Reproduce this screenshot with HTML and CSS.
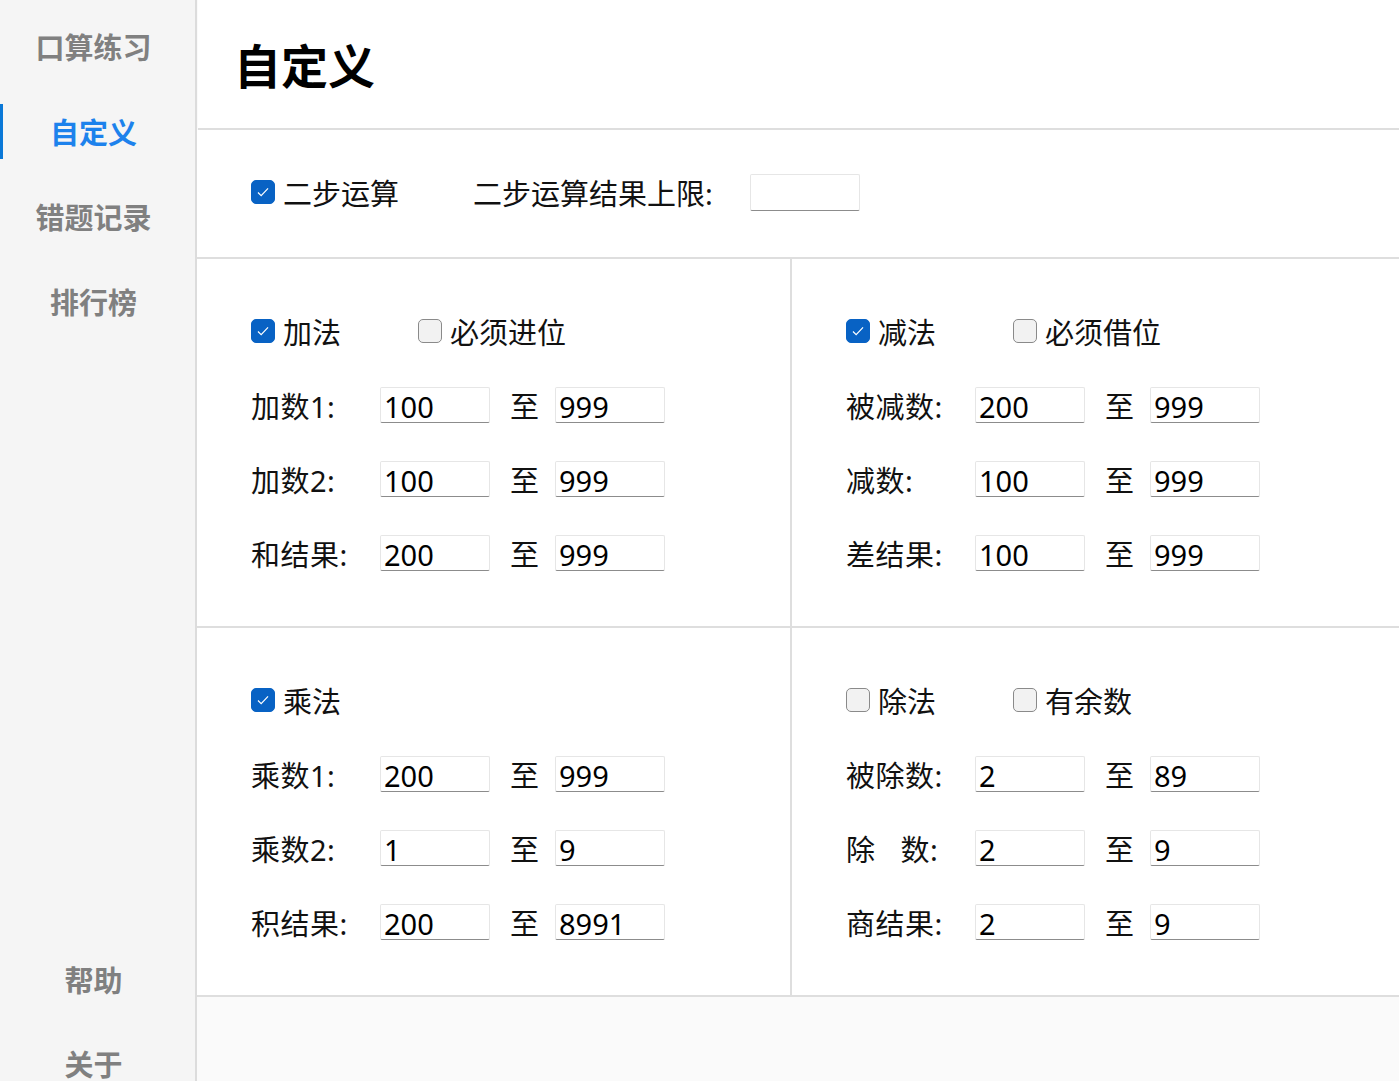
FILE: index.html
```html
<!DOCTYPE html>
<html lang="zh-CN">
<head>
  <meta charset="UTF-8">
  <title>自定义</title>
  <link rel="stylesheet" href="styles.css">
</head>
<body>
  <aside class="sidebar">
    <nav class="nav-top">
      <a class="nav-item">口算练习</a>
      <a class="nav-item active">自定义</a>
      <a class="nav-item">错题记录</a>
      <a class="nav-item">排行榜</a>
    </nav>
    <nav class="nav-bottom">
      <a class="nav-item">帮助</a>
      <a class="nav-item">关于</a>
    </nav>
  </aside>

  <main class="main">
    <header class="page-header">
      <h1>自定义</h1>
    </header>

    <section class="two-step">
      <label class="check on"><span class="box"><svg viewBox="0 0 24 24"><path d="M6.5 12.5l3.5 3.5 7.5-8" /></svg></span>二步运算</label>
      <span class="limit-label">二步运算结果上限:</span>
      <input class="num" type="text" value="">
    </section>

    <section class="ops">
      <div class="op">
        <div class="op-head">
          <label class="check on first"><span class="box"><svg viewBox="0 0 24 24"><path d="M6.5 12.5l3.5 3.5 7.5-8" /></svg></span>加法</label>
          <label class="check"><span class="box"></span>必须进位</label>
        </div>
        <div class="field"><span class="name">加数1:</span><input class="num" value="100"><span class="to">至</span><input class="num" value="999"></div>
        <div class="field"><span class="name">加数2:</span><input class="num" value="100"><span class="to">至</span><input class="num" value="999"></div>
        <div class="field"><span class="name">和结果:</span><input class="num" value="200"><span class="to">至</span><input class="num" value="999"></div>
      </div>

      <div class="op">
        <div class="op-head">
          <label class="check on first"><span class="box"><svg viewBox="0 0 24 24"><path d="M6.5 12.5l3.5 3.5 7.5-8" /></svg></span>减法</label>
          <label class="check"><span class="box"></span>必须借位</label>
        </div>
        <div class="field"><span class="name">被减数:</span><input class="num" value="200"><span class="to">至</span><input class="num" value="999"></div>
        <div class="field"><span class="name">减数:</span><input class="num" value="100"><span class="to">至</span><input class="num" value="999"></div>
        <div class="field"><span class="name">差结果:</span><input class="num" value="100"><span class="to">至</span><input class="num" value="999"></div>
      </div>

      <div class="op">
        <div class="op-head">
          <label class="check on first"><span class="box"><svg viewBox="0 0 24 24"><path d="M6.5 12.5l3.5 3.5 7.5-8" /></svg></span>乘法</label>
        </div>
        <div class="field"><span class="name">乘数1:</span><input class="num" value="200"><span class="to">至</span><input class="num" value="999"></div>
        <div class="field"><span class="name">乘数2:</span><input class="num" value="1"><span class="to">至</span><input class="num" value="9"></div>
        <div class="field"><span class="name">积结果:</span><input class="num" value="200"><span class="to">至</span><input class="num" value="8991"></div>
      </div>

      <div class="op">
        <div class="op-head">
          <label class="check first"><span class="box"></span>除法</label>
          <label class="check"><span class="box"></span>有余数</label>
        </div>
        <div class="field"><span class="name">被除数:</span><input class="num" value="2"><span class="to">至</span><input class="num" value="89"></div>
        <div class="field"><span class="name">除<span class="gap"></span>数:</span><input class="num" value="2"><span class="to">至</span><input class="num" value="9"></div>
        <div class="field"><span class="name">商结果:</span><input class="num" value="2"><span class="to">至</span><input class="num" value="9"></div>
      </div>
    </section>
  </main>
</body>
</html>
```

FILE: styles.css
```css
html, body {
  margin: 0;
  padding: 0;
  height: 100%;
  overflow: hidden;
}
body {
  display: flex;
  font-family: "Noto Sans", "Noto Sans CJK SC", sans-serif;
  color: #111;
  background: #fafafa;
}

/* sidebar */
.sidebar {
  width: 195px;
  flex: none;
  background: #f5f5f5;
  border-right: 2px solid #dcdcdc;
  display: flex;
  flex-direction: column;
  padding-top: 3px;
}
.nav-item {
  position: relative;
  display: flex;
  align-items: center;
  justify-content: center;
  height: 85px;
  padding-right: 8px;
  font-family: "Noto Sans CJK SC", sans-serif;
  font-size: 29px;
  font-weight: 700;
  color: #808080;
  cursor: pointer;
}
.nav-item.active {
  color: #1d82ec;
}
.nav-item.active::before {
  content: "";
  position: absolute;
  left: 0;
  top: 16px;
  width: 3px;
  height: 55px;
  background: #0a78d7;
}
.nav-bottom {
  margin-top: auto;
  margin-bottom: -24px;
}
.nav-bottom .nav-item {
  height: 84px;
}

/* main */
.main {
  flex: 1;
  display: flex;
  flex-direction: column;
  background: #fafafa;
}
.page-header {
  height: 130px;
  flex: none;
  background: #fff;
  border-bottom: 2px solid #dedede;
  display: flex;
  align-items: center;
  padding-left: 36px;
  box-sizing: border-box;
  margin-left: 1px;
}
.page-header h1 {
  margin: 0;
  padding-bottom: 2px;
  font-family: "Noto Sans CJK SC", sans-serif;
  font-size: 47px;
  font-weight: 700;
  color: #000;
}

.two-step {
  height: 129px;
  flex: none;
  box-sizing: border-box;
  background: #fff;
  border-bottom: 2px solid #dedede;
  display: flex;
  align-items: center;
  padding-left: 54px;
  padding-bottom: 3px;
}
.two-step .check {
  width: 222px;
}
.limit-label {
  font-size: 29px;
  width: 277px;
}
.two-step .num {
  height: 37px;
}

/* operation grid */
.ops {
  display: grid;
  grid-template-columns: 595px 1fr;
  background: #fff;
}
.op {
  height: 369px;
  box-sizing: border-box;
  padding: 35px 0 0 54px;
  border-bottom: 2px solid #dedede;
}
.op:nth-child(odd) {
  border-right: 2px solid #dedede;
}
.op-head, .field {
  height: 74px;
  display: flex;
  align-items: center;
  font-size: 29px;
}

.check {
  display: flex;
  align-items: center;
  gap: 8px;
  font-size: 29px;
  cursor: pointer;
}
.check.first {
  width: 167px;
}
.box {
  width: 22px;
  height: 22px;
  border: 1px solid #8a8a8a;
  border-radius: 5px;
  background: #f2f2f2;
  display: flex;
  align-items: center;
  justify-content: center;
}
.check.on .box {
  background: #0862c4;
  border-color: #0862c4;
}
.box svg {
  width: 22px;
  height: 22px;
  fill: none;
  stroke: #fff;
  stroke-width: 1.3;
}

.name {
  width: 129px;
  flex: none;
  letter-spacing: 0.5px;
}
.gap {
  display: inline-block;
  width: 25px;
}
.to {
  margin: 0 16px 0 20px;
}
.num {
  width: 110px;
  height: 36px;
  box-sizing: border-box;
  border: 1px solid #e6e6e6;
  border-bottom: 1px solid #8c8c8c;
  border-radius: 2px;
  background: #fff;
  padding: 2px 0 0 3px;
  font-family: "Noto Sans", sans-serif;
  font-size: 29px;
  color: #000;
  outline: none;
}
```
